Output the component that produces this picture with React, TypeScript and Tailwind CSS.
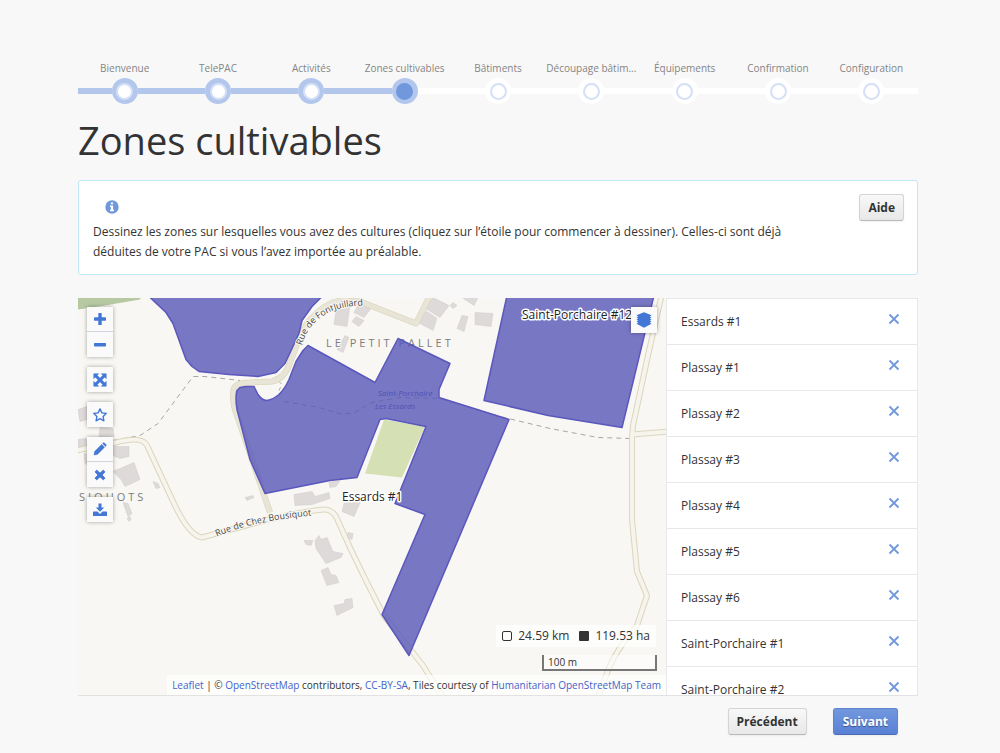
import { ReactNode } from 'react';

interface stepParams {
  stepName: string;
  state: 'done' | 'current' | 'todo';
}

interface toolParams {
  label: string;
  icon: ReactNode;
}

const steps: stepParams[] = [
  { stepName: 'Bienvenue', state: 'done' },
  { stepName: 'TelePAC', state: 'done' },
  { stepName: 'Activités', state: 'done' },
  { stepName: 'Zones cultivables', state: 'current' },
  { stepName: 'Bâtiments', state: 'todo' },
  { stepName: 'Découpage bâtim...', state: 'todo' },
  { stepName: 'Équipements', state: 'todo' },
  { stepName: 'Confirmation', state: 'todo' },
  { stepName: 'Configuration', state: 'todo' },
];

const zones: string[] = [
  'Essards #1',
  'Plassay #1',
  'Plassay #2',
  'Plassay #3',
  'Plassay #4',
  'Plassay #5',
  'Plassay #6',
  'Saint-Porchaire #1',
  'Saint-Porchaire #2',
];

const Glyph = ({ children }: { children: ReactNode }) => (
  <svg viewBox="0 0 14 14" className="size-[14px]" fill="currentColor" aria-hidden="true">
    {children}
  </svg>
);

const toolGroups: toolParams[][] = [
  [
    {
      label: 'Zoom avant',
      icon: (
        <Glyph>
          <path d="M5.3 1.6q0-.6.6-.6h2.2q.6 0 .6.6v3.700h3.700q.6 0 .6.6v2.200q0 .6-.6.6H8.700v3.700q0 .6-.6.6H5.900q-.6 0-.6-.6V8.700H1.600Q1 8.700 1 8.100V5.900q0-.6.6-.6h3.700z" />
        </Glyph>
      ),
    },
    {
      label: 'Zoom arrière',
      icon: (
        <Glyph>
          <rect x="1" y="5" width="12" height="3.4" rx="0.6" />
        </Glyph>
      ),
    },
  ],
  [
    {
      label: 'Recentrer',
      icon: (
        <Glyph>
          <path
            d="M.8.8h4.800L4.100 2.300 7 5.200l2.900-2.900L8.400.8h4.800v4.800l-1.500-1.500L8.800 7l2.900 2.900 1.500-1.500v4.800H8.400l1.500-1.500L7 8.800l-2.900 2.900 1.500 1.500H.8V8.400l1.500 1.500L5.200 7 2.300 4.100.8 5.600z"
            stroke="currentColor"
            strokeWidth="0.6"
          />
        </Glyph>
      ),
    },
  ],
  [
    {
      label: 'Dessiner une zone',
      icon: (
        <Glyph>
          <path
            d="M7 .9l1.900 4 4.300.6-3.100 3 .8 4.300L7 10.700l-3.900 2.100.8-4.300-3.100-3 4.300-.6z"
            fill="none"
            stroke="currentColor"
            strokeWidth="1.4"
            strokeLinejoin="round"
          />
        </Glyph>
      ),
    },
  ],
  [
    {
      label: 'Modifier',
      icon: (
        <Glyph>
          <path
            d="M8.700 2.300l3 3-7.200 7.200L.9 13.100l.6-3.600zM9.500 1.500l.8-.7q.5-.4 1 0l1.900 1.900q.4.500 0 1l-.7.800z"
            stroke="currentColor"
            strokeWidth="0.3"
          />
        </Glyph>
      ),
    },
    {
      label: 'Supprimer',
      icon: (
        <Glyph>
          <path
            d="M3.700 2.200L7 5.200l3.300-3 1.600 1.700L8.900 7l3 3.100-1.600 1.700L7 8.800l-3.300 3-1.600-1.700L5.100 7l-3-3.100z"
            stroke="currentColor"
            strokeWidth="1"
            strokeLinejoin="round"
          />
        </Glyph>
      ),
    },
  ],
  [
    {
      label: 'Importer',
      icon: (
        <Glyph>
          <path d="M5.500.5h3v4h2.700L7 8.800 2.800 4.500h2.700z" />
          <path d="M.6 8.500h3.900L7 10.900l2.500-2.400h3.900q.6 0 .6.6v3.300q0 .6-.6.6H.6q-.6 0-.6-.6V9.100q0-.6.6-.6z" />
        </Glyph>
      ),
    },
  ],
];

const buildings: string[] = [
  '337,304 350,306 347,327 334,325',
  '359,304 371,309 364,318 354,313',
  '356,317 364,321 359,327 352,322',
  '345,336 349,338 343,353 337,350',
  '433,298 449,306 440,318 424,308',
  '427,312 437,319 433,331 418,323 421,314',
  '462,298 478,298 474,306',
  '462,316 468,317 464,332 457,329',
  '475,313 493,314 491,327 475,325',
  '453,303 457,306 453,309 450,306',
  '78,410 87,407 87,420 80,422',
  '100,428 113,429 114,437 99,437',
  '78,440 86,439 87,446 78,448',
  '113,447 129,447 129,457 120,459 113,456',
  '84,454 90,455 89,466 85,464',
  '113,472 134,463 140,480 125,487 121,480',
  '153,482 158,484 160,488 156,489',
  '123,503 128,504 132,514 128,517',
  '127,519 130,517 131,520 129,522',
  '245,498 253,496 254,498 247,501',
  '294,495 312,492 315,497 329,493 330,499 312,505 295,506',
  '329,483 340,481 336,487 330,488',
  '345,500 361,501 354,517 342,512',
  '304,541 313,541 311,546 306,545',
  '315,541 319,536 321,540 327,538 333,552 343,554 341,558 326,564 316,549',
  '348,533 353,534 352,540 347,538',
  '321,571 328,568 331,575 336,576 339,583 327,586',
  '334,606 344,604 345,600 352,599 353,608 337,616',
];

const mainRoad =
  'M270 513L235 410Q231 392 235 387Q239 383 250 383L272 382q13-3 18-19l8-21q6-16 13-23 16-17 31-18l18 1 56 22 13-26';

const lanes: string[] = [
  'M76 451l40-8q26-7 31 3l27 58q15 32 28 34l66-18q50-11 58-10 6 1 10 7l14 31q18 38 35 70 20 25 38 48l20 32',
  'M632 435l36-3',
  'M662 294q-9 40-14 62l-15 70-1 12v82l5 52 10 24-10 30q-22 26-29 45l-12 32',
];

const AreaMap = () => (
  <svg
    viewBox="78 298 588 398"
    preserveAspectRatio="xMidYMid slice"
    className="absolute inset-0 h-full w-full font-['Open_Sans',sans-serif]"
    role="img"
    aria-label="Carte des zones cultivables"
  >
    <defs>
      <path id="fontjuillard" d="M302 346C307 327 322 307 362 306" />
      <path id="bousiquot" d="M217 537C240 527 270 520 312 516" />
    </defs>
    <rect x="0" y="200" width="800" height="600" fill="#f8f7f3" />
    <path d="M78 298h63l-1 2-35 6-27 4z" fill="#b7c9a3" />
    <path d="M384 420l41 7-23 51-37-4z" fill="#d5e0b5" />
    <g fill="#dfdada" stroke="#d0cbcb" strokeWidth="0.5">
      {buildings.map((points) => (
        <polygon key={points} points={points} />
      ))}
    </g>
    <g fill="none" stroke="#aaa7a2" strokeWidth="1" strokeDasharray="5 4">
      <path d="M113 441l27-5 18-12 35-47h12l35 4" />
      <path d="M284 402l35 6 20 6h14l19-11 28-5 40 1 60 18 50 12 48 9 32 1" />
      <path d="M278 381l4 4-3 6" />
    </g>
    {/* roads, casing first */}
    <g fill="none" strokeLinejoin="round">
      <path d={mainRoad} stroke="#d6d2b8" strokeWidth="6" />
      <path d={mainRoad} stroke="#e8e5d6" strokeWidth="5" />
      {lanes.map((lane) => (
        <path key={lane} d={lane} stroke="#dbd6bd" strokeWidth="6" />
      ))}
      {lanes.map((lane) => (
        <path key={lane} d={lane} stroke="#f6f4ec" strokeWidth="4" />
      ))}
    </g>
    <g
      fill="#7c7c7c"
      stroke="#f8f7f3"
      strokeWidth="2"
      className="text-[11px] font-medium tracking-[3px] [paint-order:stroke]"
    >
      <text x="326" y="347">LE PETIT PALLET</text>
      <text x="79" y="501">SIQUOTS</text>
    </g>
    <g fill="#30309a" className="text-[8px] italic">
      <text x="378" y="396">Saint-Porchaire</text>
      <text x="375" y="409">Les Essards</text>
    </g>
    <g fill="#5756b8" fillOpacity="0.8" stroke="#5a57bd" strokeWidth="1.5" strokeLinejoin="round">
      <path d="M148 296l18 17 7 11 13 36 6 7 7 5 30 3 29 2 18-4 9-9 14-30 3-13 10-14 11-11z" />
      <path d="M237 391l3-3 6-1h8l4 8q4 6 9 6 6-1 12-6 6-6 10-15l7-18 7-11 5-5 67 37 23-44 52 25-11 26v8l70 22-100 236-27-41 43-100-30-11 31-77-40-8-6 1-23 58-27 3-65 13-15-34-13-50q-2-12 0-19z" />
      <path d="M507 296l-23 105 64 15 74 12 32-132z" />
    </g>
    <g fill="#444" stroke="#f8f7f3" strokeWidth="2" className="text-[9px] [paint-order:stroke]">
      <text>
        <textPath href="#fontjuillard">Rue de FontJuillard</textPath>
      </text>
      <text>
        <textPath href="#bousiquot">Rue de Chez Bousiquot</textPath>
      </text>
    </g>
    <g
      fill="#222"
      stroke="#fff"
      strokeWidth="3"
      strokeLinejoin="round"
      className="text-[12px] [paint-order:stroke]"
    >
      <text x="342" y="501">Essards #1</text>
      <text x="522" y="319">Saint-Porchaire #12</text>
    </g>
  </svg>
);

const MapTools = () => (
  <div className="absolute top-[9px] left-[9px] flex flex-col gap-[10px] text-[#4377d6]">
    {toolGroups.map((group, index) => (
      <div key={index} className="divide-y divide-gray-300 bg-[#fafafa] shadow-[0_0_4px_rgba(0,0,0,0.35)]">
        {group.map((tool) => (
          <button
            key={tool.label}
            type="button"
            aria-label={tool.label}
            className="flex h-[25px] w-[26px] items-center justify-center"
          >
            {tool.icon}
          </button>
        ))}
      </div>
    ))}
  </div>
);

const Stepper = () => (
  <ol className="grid grid-cols-9 text-center text-[10px] leading-4 text-[#858585]">
    {steps.map((step) => (
      <li key={step.stepName}>
        <p className="whitespace-nowrap">{step.stepName}</p>
        <div className="mt-[2px] flex items-center">
          <span className={`h-[6px] flex-1 ${step.state === 'todo' ? 'bg-white' : 'bg-[#b3c7ed]'}`} />
          <span
            className={`flex size-[26px] items-center justify-center rounded-full ${
              step.state === 'todo' ? 'bg-white' : 'bg-[#b3c7ed]'
            }`}
          >
            <span
              className={`size-[17px] rounded-full border-2 ${
                step.state === 'current' ? 'border-[#7198dd] bg-[#7198dd]' : 'border-[#d5e0f6] bg-white'
              }`}
            />
          </span>
          <span className={`h-[6px] flex-1 ${step.state === 'done' ? 'bg-[#b3c7ed]' : 'bg-white'}`} />
        </div>
      </li>
    ))}
  </ol>
);

const grayButton =
  'h-[27px] rounded-[3px] border border-[#d4d4d4] border-b-[#b8b8b8] bg-linear-to-b from-[#f8f8f8] to-[#e8e8e8] px-2 font-bold shadow-xs';

const App = () => {
  return (
    <div className="flex h-screen flex-col bg-[#f8f8f8] pt-[60px] pr-[82px] pl-[78px] font-['Open_Sans',sans-serif] text-[12px] text-[#333]">
      <Stepper />
      <h1 className="mt-3 mb-4 text-[38px] leading-[48px]">Zones cultivables</h1>

      <section className="flex items-start justify-between rounded-[3px] border border-[#bfe9f2] bg-white pt-[13px] pr-[13px] pb-3 pl-[14px]">
        <div className="w-[86%]">
          <svg viewBox="0 0 14 14" className="mt-[6px] mb-2 ml-3 size-[14px]" aria-hidden="true">
            <circle cx="7" cy="7" r="6.7" fill="#7198dd" />
            <path d="M5.900 2.400h2.200v1.900H5.900zM5 5.400h3.100v4.300H9v1.500H5V9.700h.9V6.900H5z" fill="#fff" />
          </svg>
          <p className="leading-5">
            Dessinez les zones sur lesquelles vous avez des cultures (cliquez sur l’étoile pour commencer à dessiner).
            Celles-ci sont déjà déduites de votre PAC si vous l’avez importée au préalable.
          </p>
        </div>
        <button type="button" className={grayButton}>
          Aide
        </button>
      </section>

      <main className="mt-[23px] grid min-h-0 flex-1 grid-cols-[7fr_3fr] grid-rows-[minmax(0,1fr)] border-b border-[#e2e2e2]">
        <div className="relative overflow-hidden">
          <AreaMap />
          <MapTools />
          <button
            type="button"
            aria-label="Fonds de carte"
            className="absolute top-[9px] right-[9px] flex size-[26px] items-center justify-center bg-[#fafafa] text-[#4377d6] shadow-[0_0_4px_rgba(0,0,0,0.35)]"
          >
            <svg viewBox="0 0 16 16" className="size-4" fill="currentColor" aria-hidden="true">
              <path d="M8 .3l7.500 3-1.700 1.200 1.700.9-1.700 1.200 1.700.9-1.700 1.200 1.700.9-1.700 1.200 1.700.9L8 15.700l-7.500-4 1.700-.9-1.700-1.200 1.700-.9L.5 7.500l1.700-.9L.5 5.400l1.700-.9L.5 3.300z" />
            </svg>
          </button>
          <div className="absolute right-0 bottom-0 flex flex-col items-end">
            <div className="mr-[10px] flex h-[22px] items-center bg-white/70 px-[6px]">
              <span className="mr-[6px] size-[10px] rounded-[2px] border border-[#333]" />
              <span>24.59 km</span>
              <span className="mr-[6px] ml-[10px] size-[10px] rounded-[1px] bg-[#333]" />
              <span>119.53 ha</span>
            </div>
            <div className="mt-2 mr-[9px] w-[115px] border-2 border-t-0 border-[#777] bg-white/50 px-1 text-[10px] leading-[14px]">
              100 m
            </div>
            <p className="mt-[4px] bg-white/70 px-[5px] text-[10px] leading-5 whitespace-nowrap [&_a]:text-[#4463c9]">
              <a href="#leaflet">Leaflet</a> | © <a href="#osm">OpenStreetMap</a> contributors,{' '}
              <a href="#cc">CC-BY-SA</a>, Tiles courtesy of <a href="#hot">Humanitarian OpenStreetMap Team</a>
            </p>
          </div>
        </div>

        <ul className="overflow-hidden border border-b-0 border-[#e8e8e8] bg-white">
          {zones.map((zone) => (
            <li
              key={zone}
              className="flex h-[46px] items-center justify-between border-b border-[#e8e8e8] pr-[17px] pl-[14px]"
            >
              <span>{zone}</span>
              <button type="button" aria-label={`Supprimer ${zone}`} className="mb-[6px] text-[#7198dd]">
                <svg viewBox="0 0 12 12" className="size-3" fill="none" stroke="currentColor" strokeWidth="1.8">
                  <path d="M1.500 1.500l9 9M10.500 1.500l-9 9" />
                </svg>
              </button>
            </li>
          ))}
        </ul>
      </main>

      <footer className="flex justify-end gap-[26px] pt-3 pr-5 pb-[18px]">
        <button type="button" className={grayButton}>
          Précédent
        </button>
        <button
          type="button"
          className="h-[27px] rounded-[3px] border border-[#5f83cf] border-b-[#4a6cb5] bg-linear-to-b from-[#7198dd] to-[#5a80d6] px-[9px] font-bold text-white shadow-xs [text-shadow:0_1px_1px_rgba(0,0,0,0.4)]"
        >
          Suivant
        </button>
      </footer>
    </div>
  );
};

export default App;
